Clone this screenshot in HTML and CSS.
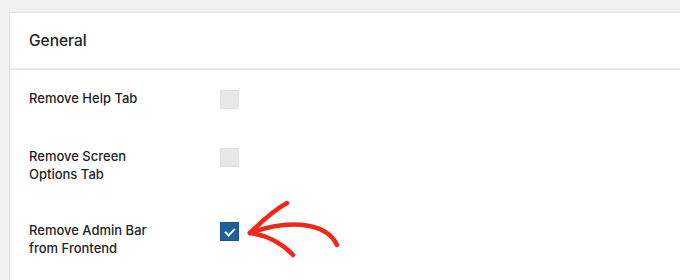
FILE: index.html
```html
<!DOCTYPE html>
<html>

<head>
    <meta name="viewport" content="width=device-width, initial-scale=1.0" charset="utf-8">
    <title>General settings</title>
    <link rel="stylesheet" href="styles.css">
</head>

<body>
    <div class="panel">
        <div class="panel-head">
            <h2>General</h2>
        </div>
        <div class="panel-body">
            <div class="row">
                <label class="label" for="help">Remove Help Tab</label>
                <div class="field"><input id="help" class="check" type="checkbox"></div>
            </div>
            <div class="row">
                <label class="label" for="screen">Remove Screen Options Tab</label>
                <div class="field"><input id="screen" class="check" type="checkbox"></div>
            </div>
            <div class="row">
                <label class="label" for="adminbar">Remove Admin Bar from Frontend</label>
                <div class="field"><input id="adminbar" class="check" type="checkbox" checked></div>
            </div>
        </div>
        <!-- annotation arrow pointing at the checked box -->
        <svg class="arrow" width="110" height="70" viewBox="0 0 110 70">
            <path d="M99 54 C 90 34, 56 26, 12 42" />
            <path d="M12 42 C 24 30, 38 18, 49 12" />
            <path d="M12 42 C 28 44, 44 52, 55 64" />
        </svg>
    </div>
</body>
</html>
```

FILE: styles.css
```css
* {
  box-sizing: border-box;
}
html, body {
  margin: 0;
  height: 100%;
  overflow: hidden;
}
body {
  background-color: #f0f0f1;
  font-family: Inter, "Liberation Sans", Arial, sans-serif;
  color: #1d2327;
  padding: 12px 0 0 9px;
}
.panel {
  position: relative;
  width: calc(100% + 10px);
  height: calc(100% + 10px);
  background-color: #fff;
  border: 1px solid #e3e3e3;
}
.panel-head {
  height: 57px;
  padding: 0 19px;
  display: flex;
  align-items: center;
  border-bottom: 2px solid #e8e8e8;
}
.panel-head h2 {
  margin: 0;
  font-size: 15.5px;
  font-weight: 500;
  color: #1d2327;
}
.panel-body {
  padding: 0 19px;
}
.row {
  display: grid;
  grid-template-columns: 191px auto;
  padding: 19px 0;
}
.label {
  max-width: 140px;
  font-size: 13px;
  font-weight: 500;
  line-height: 18px;
  color: #1d2327;
}
.field {
  padding-top: 1px;
}
.check {
  -webkit-appearance: none;
  appearance: none;
  display: block;
  margin: 0;
  width: 19px;
  height: 19px;
  background-color: #e7e7e7;
  border: 1px solid #e0e0e0;
  position: relative;
}
.check:checked {
  background-color: #215f99;
  border-color: #1d5488;
}
.check:checked::after {
  content: "";
  position: absolute;
  left: 6px;
  top: 3px;
  width: 4px;
  height: 8px;
  border: solid #fff;
  border-width: 0 2px 2px 0;
  transform: rotate(45deg);
}
.arrow {
  position: absolute;
  left: 228px;
  top: 178px;
}
.arrow path {
  fill: none;
  stroke: #f0281a;
  stroke-width: 4.5;
  stroke-linecap: round;
  stroke-linejoin: round;
}
```
